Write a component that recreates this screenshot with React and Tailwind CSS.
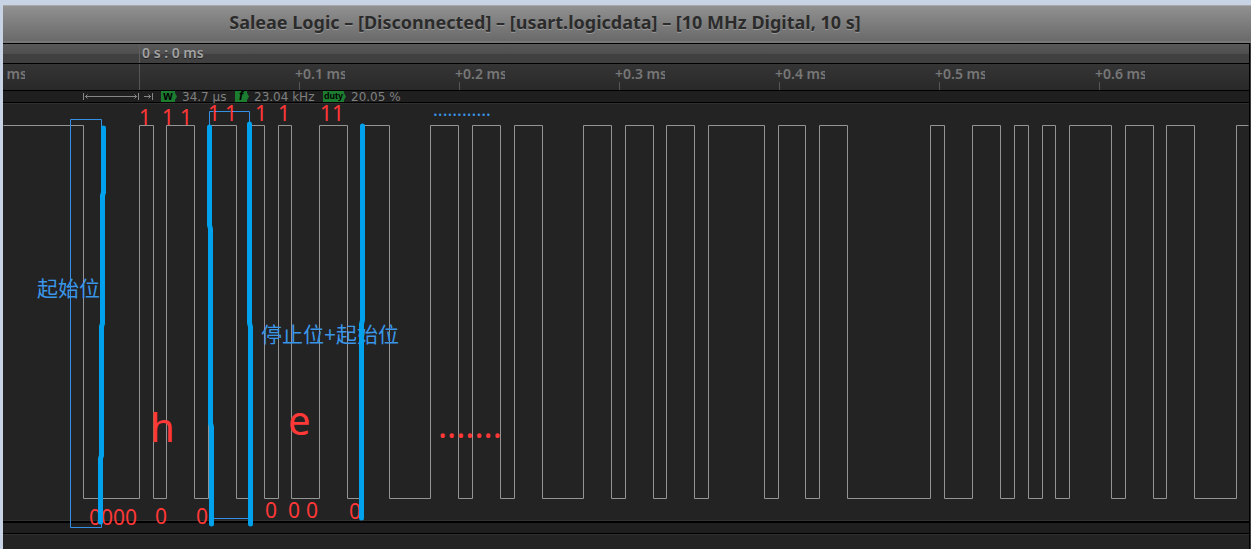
const TICKS = ['+0.9 ms', '', '+0.1 ms', '+0.2 ms', '+0.3 ms', '+0.4 ms', '+0.5 ms', '+0.6 ms'];

const MEASURES = [
  { tag: 'w', value: '34.7 µs', tagClass: 'w-[14px] text-xs', valueClass: 'w-[58px]' },
  { tag: 'f', value: '23.04 kHz', tagClass: 'w-3 text-xs italic', valueClass: 'w-[74px]' },
  { tag: 'duty', value: '20.05 %', tagClass: 'w-[21px] text-[9px]', valueClass: 'w-[74px]' },
];

// x of every level change, the line starts high
const EDGES = [
  83, 139, 153, 166, 194, 208, 236, 250, 264, 278, 291, 319, 347, 361, 389, 430,
  458, 472, 500, 514, 542, 583, 611, 625, 653, 666, 694, 708, 764, 778, 805, 819,
  847, 930, 944, 972, 1000, 1014, 1028, 1042, 1055, 1069, 1111, 1125, 1153, 1166,
  1194, 1236,
];
const HIGH = 125;
const LOW = 498;

const BITS = [
  { x: 139, y: 125, text: '1' },
  { x: 162, y: 125, text: '1' },
  { x: 180, y: 125, text: '1' },
  { x: 208, y: 121, text: '1' },
  { x: 225, y: 121, text: '1' },
  { x: 255, y: 121, text: '1' },
  { x: 278, y: 121, text: '1' },
  { x: 320, y: 121, text: '11' },
  { x: 89, y: 525, text: '0000' },
  { x: 155, y: 524, text: '0' },
  { x: 196, y: 524, text: '0' },
  { x: 265, y: 518, text: '0' },
  { x: 288, y: 518, text: '0' },
  { x: 306, y: 518, text: '0' },
  { x: 349, y: 519, text: '0' },
];

function wavePath() {
  let d = `M3 ${HIGH}`;
  EDGES.forEach((x, i) => {
    d += `H${x}V${i % 2 === 0 ? LOW : HIGH}`;
  });
  return `${d}H1248`;
}

function TitleBar() {
  return (
    <header className="flex h-[38px] shrink-0 items-center justify-center border-t border-[#a8a8a8] border-b-2 border-b-[#777777] bg-linear-to-b from-[#919191] to-[#6a6a6a] pb-[3px] pr-[164px]">
      <h1 className="whitespace-nowrap font-['Noto_Sans'] text-lg leading-6 font-bold text-[#2b2b2b] [text-shadow:0_1px_0_#9a9a9a]">
        Saleae Logic – [Disconnected] – [usart.logicdata] – [10 MHz Digital, 10 s]
      </h1>
    </header>
  );
}

function Ruler() {
  return (
    <div className="shrink-0 overflow-hidden font-['Noto_Sans'] text-sm font-semibold">
      <div className="flex h-5 border-b border-black bg-linear-to-b from-[#595959] from-0% via-[#4f4f4f] via-50% to-[#404040] to-55%">
        <div className="ml-[136px] border-l border-[#5e5e5e] pl-[2px] leading-[17px] text-[#a2a2a2] [text-shadow:0_1px_0_#222]">
          0 s : 0 ms
        </div>
      </div>
      <div className="-ml-7 flex h-[27px] border-b border-black bg-linear-to-b from-[#353535] to-[#292929]">
        {TICKS.map((label, i) => (
          <div key={i} className="flex w-[160px] shrink-0 flex-col justify-between">
            <span className="w-[50px] overflow-hidden whitespace-nowrap leading-[20px] text-[#777777]">{label}</span>
            <span className={label ? 'ml-1 h-2 w-px shrink-0 bg-[#555555]' : 'ml-1 h-[26px] w-px shrink-0 bg-[#555555]'} />
          </div>
        ))}
      </div>
    </div>
  );
}

function Measurements() {
  return (
    <div className="flex h-3 shrink-0 border-b border-black bg-[#1f1f1f] pl-[80px] font-['DejaVu_Sans'] text-xs leading-3 text-[#808080]">
      <svg width="78" height="11" className="shrink-0" fill="none" stroke="#868686">
        <path d="M.5 2v7M55.5 2v7M2 5.500H54M4.500 3.500l-2 2 2 2M51.500 3.500l2 2-2 2" />
        <path d="M69.500 2v7M61 5.500h7M65.500 3.500l2 2-2 2" />
      </svg>
      {MEASURES.map((m) => (
        <div key={m.tag} className="flex shrink-0">
          <b className={`${m.tagClass} h-[11px] bg-[#1c7c30] text-center font-['Liberation_Sans'] leading-[11px] text-black`}>{m.tag}</b>
          <svg width="2" height="11" fill="#1c7c30">
            <path d="M0 2l2 3.500L0 9z" />
          </svg>
          <span className={`${m.valueClass} whitespace-nowrap pl-[5px]`}>{m.value}</span>
        </div>
      ))}
    </div>
  );
}

function Waveform() {
  return (
    <main className="relative z-10 min-h-[418px] flex-1 border-y border-[#303030] bg-[#232323]">
      <svg viewBox="3 104 1245 416" className="h-[416px] w-[1245px] overflow-visible font-['Noto_Sans','Noto_Sans_CJK_SC',sans-serif]">
        <path d={wavePath()} fill="none" stroke="#949494" transform="translate(.5 .5)" />

        <g fill="none" stroke="#3490e4">
          <path d="M70.500 119.500H101.500V527.500H70.500z" />
          <path d="M209.500 111.500H249.500V518.500H209.500z" />
        </g>

        <g fill="#ff3838">
          {BITS.map((b) => (
            <text key={b.x} x={b.x} y={b.y} fontSize="21">{b.text}</text>
          ))}
          <text x="150" y="442" fontSize="40">h</text>
          <text x="288" y="435" fontSize="40">e</text>
          <text x="438" y="438" fontSize="34">.......</text>
        </g>

        <g fill="#3a96e8">
          <text x="37" y="296" fontSize="21">起始位</text>
          <text x="261" y="342" fontSize="21">停止位+起始位</text>
          <text x="433" y="116" fontSize="18">............</text>
        </g>

        {/* hand drawn byte separators */}
        <g fill="none" stroke="#00a2ed" strokeWidth="5" strokeLinecap="round" strokeLinejoin="round">
          <path d="M103.500 128V192M102.500 196V323M101.500 327V455M100.500 459V522" />
          <path d="M209.500 127V225M210.500 229V423M211.500 427V524M103.500 192l-1 4M102.500 323l-1 4M101.500 455l-1 4M209.500 225l1 4M210.500 423l1 4" />
          <path d="M249.500 124V323l1 4V524" />
          <path d="M362.500 126V320l-1 4V518" />
        </g>
      </svg>
    </main>
  );
}

export default function App() {
  return (
    <div className="flex min-h-screen flex-col bg-[#c8d3e6] pl-[3px] pt-[5px]">
      <TitleBar />
      <div className="flex flex-1 flex-col bg-[#3c3c3c] pr-px">
        <div className="flex flex-1 flex-col border-r border-t border-black bg-[#232323]">
          <Ruler />
          <Measurements />
          <Waveform />
          <div className="h-[13px] shrink-0 border-b border-t-2 border-black bg-[#1f1f1f]" />
          <div className="h-[15px] shrink-0 border-t border-[#303030] bg-[#232323]" />
        </div>
      </div>
    </div>
  );
}
